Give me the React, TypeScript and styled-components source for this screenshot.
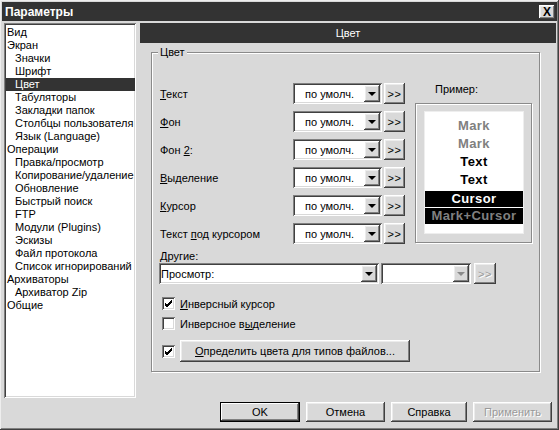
import React from 'react';
import styled, { createGlobalStyle } from 'styled-components';

const BG = '#d9d9d9';

const Global = createGlobalStyle`
  html, body { margin: 0; padding: 0; background: ${BG}; }
  body { font-family: "Liberation Sans", Arial, sans-serif; font-size: 11px; color: #000; }
  * { box-sizing: border-box; }
`;

const raised = `box-shadow: inset -1px -1px #404040, inset 1px 1px #ffffff, inset -2px -2px #808080, inset 2px 2px #ececec;`;
const sunken = `box-shadow: inset 1px 1px #808080, inset -1px -1px #ffffff, inset 2px 2px #404040, inset -2px -2px ${BG};`;

const Window = styled.div`
  width: 559px;
  height: 430px;
  background: ${BG};
  display: flex;
  flex-direction: column;
  padding: 2px 2px 2px 2px;
  box-shadow: inset -1px -1px #404040, inset 1px 1px #eeeeee, inset -2px -2px #808080;
`;

const TitleBar = styled.div`
  height: 19px;
  background: #333333;
  color: #fff;
  display: flex;
  align-items: center;
  justify-content: space-between;
  padding: 0 2px 0 3px;
  font-weight: bold;
  font-size: 12px;
`;

const CloseBtn = styled.div`
  width: 16px;
  height: 14px;
  background: ${BG};
  ${raised}
  color: #000;
  font-size: 12px;
  font-weight: bold;
  display: flex;
  align-items: center;
  justify-content: center;
  line-height: 1;
`;

const Body = styled.div`
  display: flex;
  gap: 4px;
  margin-top: 2px;
  padding-left: 2px;
`;

const Tree = styled.div`
  width: 132px;
  height: 375px;
  background: #fff;
  ${sunken}
  padding: 3px 1px 2px 2px;
  display: flex;
  flex-direction: column;
`;

const TreeItem = styled.div<{ $level: number; $selected?: boolean }>`
  height: 13px;
  line-height: 13px;
  padding-left: ${(p) => (p.$level ? 9 : 1)}px;
  background: ${(p) => (p.$selected ? '#333333' : 'transparent')};
  color: ${(p) => (p.$selected ? '#fff' : '#000')};
  white-space: nowrap;
`;

const RightCol = styled.div`
  width: 416px;
  display: flex;
  flex-direction: column;
`;

const Header = styled.div`
  height: 20px;
  line-height: 20px;
  background: #333333;
  color: #fff;
  text-align: center;
`;

const Group = styled.div`
  position: relative;
  margin: 9px 0 0 11px;
  width: 389px;
  height: 320px;
  border: 1px solid #8a8a8a;
  box-shadow: inset 1px 1px #ffffff, 1px 1px #ffffff;
  padding: 30px 0 0 8px;
  display: flex;
  flex-direction: column;
`;

const Legend = styled.span`
  position: absolute;
  top: -7px;
  left: 6px;
  padding: 0 2px;
  background: ${BG};
  line-height: 13px;
`;

const TopSection = styled.div`
  display: flex;
`;

const Rows = styled.div`
  display: flex;
  flex-direction: column;
  gap: 7px;
`;

const Row = styled.div`
  display: flex;
  align-items: center;
  height: 21px;
`;

const Label = styled.div`
  width: 133px;
  white-space: nowrap;
`;

const U = styled.span`
  text-decoration: underline;
`;

const Combo = styled.div<{ $w: number }>`
  width: ${(p) => p.$w}px;
  height: 21px;
  background: #fff;
  ${sunken}
  padding: 2px;
  display: flex;
  align-items: stretch;
`;

const ComboText = styled.div<{ $center?: boolean }>`
  flex: 1;
  display: flex;
  align-items: center;
  justify-content: ${(p) => (p.$center ? 'center' : 'flex-start')};
  padding-left: ${(p) => (p.$center ? 0 : 0)}px;
  white-space: nowrap;
`;

const DropBtn = styled.div<{ $disabled?: boolean }>`
  width: 16px;
  background: ${BG};
  ${raised}
  display: flex;
  align-items: center;
  justify-content: center;
  &::after {
    content: '';
    width: 0;
    height: 0;
    border-left: 4px solid transparent;
    border-right: 4px solid transparent;
    border-top: 4px solid ${(p) => (p.$disabled ? '#8a8a8a' : '#000')};
  }
`;

const SmallBtn = styled.div<{ $w?: number; $disabled?: boolean }>`
  width: ${(p) => p.$w ?? 21}px;
  height: 21px;
  margin-left: ${(p) => (p.$disabled ? 1 : 2)}px;
  background: ${BG};
  ${raised}
  display: flex;
  align-items: center;
  justify-content: center;
  color: ${(p) => (p.$disabled ? '#9a9a9a' : '#000')};
  text-shadow: ${(p) => (p.$disabled ? '1px 1px #fff' : 'none')};
  letter-spacing: 0.5px;
`;

const SampleCol = styled.div`
  margin-left: 10px;
  display: flex;
  flex-direction: column;
`;

const SampleLabel = styled.div`
  line-height: 13px;
  padding-left: 20px;
`;

const SampleFrame = styled.div`
  margin-top: 7px;
  width: 117px;
  height: 140px;
  border: 1px solid #8a8a8a;
  box-shadow: inset 1px 1px #ffffff, 1px 1px #ffffff;
  padding: 7px 7px 7px 8px;
`;

const SampleBox = styled.div`
  width: 100px;
  height: 123px;
  background: #fff;
  border: 1px solid #eeeeee;
  padding-top: 5px;
  display: flex;
  flex-direction: column;
  font-size: 13px;
  font-weight: bold;
`;

const SampleLine = styled.div<{ $color: string; $bg?: string; $mt?: number }>`
  height: ${(p) => (p.$bg ? 16 : 18)}px;
  line-height: ${(p) => (p.$bg ? 16 : 18)}px;
  margin-top: ${(p) => p.$mt ?? 0}px;
  text-align: center;
  color: ${(p) => p.$color};
  background: ${(p) => p.$bg ?? 'transparent'};
  letter-spacing: 0.4px;
`;

const OtherLabel = styled.div`
  margin-top: 6px;
  line-height: 13px;
`;

const OtherRow = styled.div`
  display: flex;
  margin-left: -1px;
  gap: 2px;
`;

const CheckRow = styled.div<{ $mt: number }>`
  display: flex;
  align-items: center;
  gap: 5px;
  margin-top: ${(p) => p.$mt}px;
  padding-left: 2px;
`;

const Box = styled.div`
  width: 13px;
  height: 13px;
  background: #fff;
  ${sunken}
  display: flex;
  align-items: center;
  justify-content: center;
`;

const PushBtn = styled.div<{ $w: number; $default?: boolean; $disabled?: boolean }>`
  width: ${(p) => p.$w}px;
  height: ${(p) => (p.$default !== undefined ? 20 : 22)}px;
  background: ${BG};
  ${(p) =>
    p.$default
      ? `box-shadow: inset 0 0 0 1px #000, inset -2px -2px #404040, inset 2px 2px #ffffff, inset -3px -3px #808080;`
      : raised}
  display: flex;
  align-items: center;
  justify-content: center;
  color: ${(p) => (p.$disabled ? '#9a9a9a' : '#000')};
  text-shadow: ${(p) => (p.$disabled ? '1px 1px #fff' : 'none')};
  white-space: nowrap;
`;

const Footer = styled.div`
  display: flex;
  justify-content: flex-end;
  gap: 6px;
  margin-top: 4px;
  padding-right: 5px;
`;

const Check = () => (
  <svg width="9" height="9" viewBox="0 0 9 9">
    <path d="M1 4 L3 6 L8 1 M1 5 L3 7 L8 2 M1 6 L3 8 L8 3" stroke="#000" strokeWidth="1" fill="none" />
  </svg>
);

const tree: [string, number][] = [
  ['Вид', 0],
  ['Экран', 0],
  ['Значки', 1],
  ['Шрифт', 1],
  ['Цвет', 1],
  ['Табуляторы', 1],
  ['Закладки папок', 1],
  ['Столбцы пользователя', 1],
  ['Язык (Language)', 1],
  ['Операции', 0],
  ['Правка/просмотр', 1],
  ['Копирование/удаление', 1],
  ['Обновление', 1],
  ['Быстрый поиск', 1],
  ['FTP', 1],
  ['Модули (Plugins)', 1],
  ['Эскизы', 1],
  ['Файл протокола', 1],
  ['Список игнорирований', 1],
  ['Архиваторы', 0],
  ['Архиватор Zip', 1],
  ['Общие', 0],
];

const colorRows: React.ReactNode[] = [
  <><U>Т</U>екст</>,
  <><U>Ф</U>он</>,
  <>Фон <U>2</U>:</>,
  <><U>В</U>ыделение</>,
  <><U>К</U>урсор</>,
  <>Текст <U>п</U>од курсором</>,
];

export default function App() {
  return (
    <>
      <Global />
      <Window>
        <TitleBar>
          <span>Параметры</span>
          <CloseBtn>X</CloseBtn>
        </TitleBar>
        <Body>
          <Tree>
            {tree.map(([t, l]) => (
              <TreeItem key={t} $level={l} $selected={t === 'Цвет'}>
                {t}
              </TreeItem>
            ))}
          </Tree>
          <RightCol>
            <Header>Цвет</Header>
            <Group>
              <Legend>Цвет</Legend>
              <TopSection>
                <Rows>
                  {colorRows.map((lab, i) => (
                    <Row key={i}>
                      <Label>{lab}</Label>
                      <Combo $w={89}>
                        <ComboText $center>по умолч.</ComboText>
                        <DropBtn />
                      </Combo>
                      <SmallBtn>&gt;&gt;</SmallBtn>
                    </Row>
                  ))}
                </Rows>
                <SampleCol>
                  <SampleLabel>Пример:</SampleLabel>
                  <SampleFrame>
                    <SampleBox>
                      <SampleLine $color="#808080">Mark</SampleLine>
                      <SampleLine $color="#808080">Mark</SampleLine>
                      <SampleLine $color="#000">Text</SampleLine>
                      <SampleLine $color="#000">Text</SampleLine>
                      <SampleLine $color="#fff" $bg="#000" $mt={2}>Cursor</SampleLine>
                      <SampleLine $color="#808080" $bg="#000" $mt={1}>Mark+Cursor</SampleLine>
                    </SampleBox>
                  </SampleFrame>
                </SampleCol>
              </TopSection>
              <OtherLabel>
                <U>Д</U>ругие:
              </OtherLabel>
              <OtherRow>
                <Combo $w={220}>
                  <ComboText>Просмотр:</ComboText>
                  <DropBtn />
                </Combo>
                <Combo $w={90}>
                  <ComboText />
                  <DropBtn $disabled />
                </Combo>
                <SmallBtn $w={22} $disabled>&gt;&gt;</SmallBtn>
              </OtherRow>
              <CheckRow $mt={13}>
                <Box><Check /></Box>
                <span><U>И</U>нверсный курсор</span>
              </CheckRow>
              <CheckRow $mt={7}>
                <Box />
                <span>Инверсное в<U>ы</U>деление</span>
              </CheckRow>
              <CheckRow $mt={10}>
                <Box><Check /></Box>
                <PushBtn $w={230}>
                  <span><U>О</U>пределить цвета для типов файлов...</span>
                </PushBtn>
              </CheckRow>
            </Group>
          </RightCol>
        </Body>
        <Footer>
          <PushBtn $w={80} $default>OK</PushBtn>
          <PushBtn $w={79} $default={false}>Отмена</PushBtn>
          <PushBtn $w={76} $default={false}>Справка</PushBtn>
          <PushBtn $w={79} $default={false} $disabled>Применить</PushBtn>
        </Footer>
      </Window>
    </>
  );
}
